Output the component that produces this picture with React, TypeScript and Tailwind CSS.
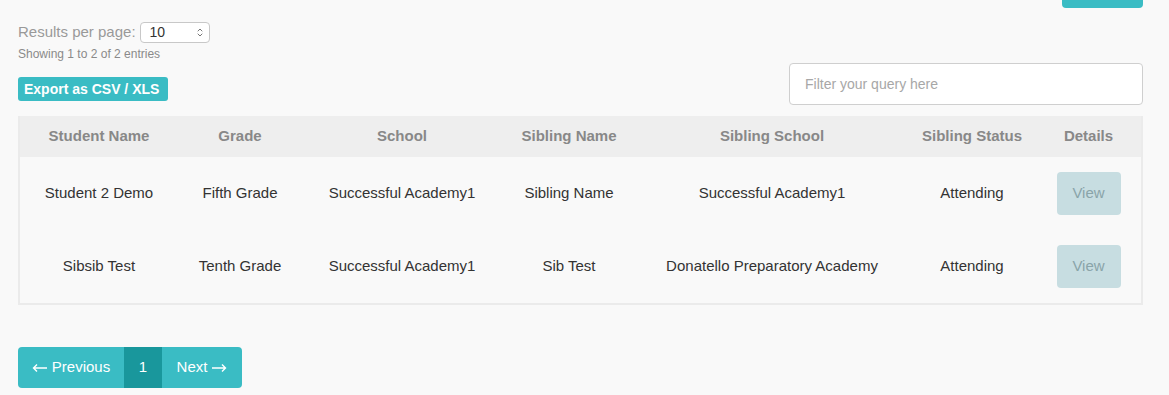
import { ChevronDown, ChevronUp } from 'lucide-react';

interface SiblingRow {
  student: string;
  grade: string;
  school: string;
  sibling: string;
  siblingSchool: string;
  status: string;
}

const rows: SiblingRow[] = [
  {
    student: 'Student 2 Demo',
    grade: 'Fifth Grade',
    school: 'Successful Academy1',
    sibling: 'Sibling Name',
    siblingSchool: 'Successful Academy1',
    status: 'Attending',
  },
  {
    student: 'Sibsib Test',
    grade: 'Tenth Grade',
    school: 'Successful Academy1',
    sibling: 'Sib Test',
    siblingSchool: 'Donatello Preparatory Academy',
    status: 'Attending',
  },
];

const headers = [
  { label: 'Student Name', w: 'w-[158px]' },
  { label: 'Grade', w: 'w-[124px]' },
  { label: 'School', w: 'w-[200px]' },
  { label: 'Sibling Name', w: 'w-[134px]' },
  { label: 'Sibling School', w: 'w-[272px]' },
  { label: 'Sibling Status', w: 'w-[128px]' },
  { label: 'Details', w: 'w-[105px]' },
];

function Arrow({ dir }: { dir: 'left' | 'right' }) {
  const d = dir === 'left' ? 'M15 5H1.5M5 1.5L1.5 5 5 8.5' : 'M0 5h13.5M10 1.5L13.5 5 10 8.5';
  return (
    <svg width="15" height="10" viewBox="0 0 15 10" fill="none" stroke="currentColor" strokeWidth="1.4">
      <path d={d} />
    </svg>
  );
}

export default function App() {
  return (
    <div className="w-[1169px] h-[395px] overflow-hidden bg-[#f9f9f9] font-['Liberation_Sans',Arial,sans-serif] text-[#333]">
      <div className="ml-[18px] w-[1125px]">
        {/* top-right action button, cut off by the viewport */}
        <div className="flex justify-end">
          <div className="w-[81px] h-[8px] rounded-b-[4px] bg-[#3abcc4]"></div>
        </div>

        <div className="flex items-start justify-between">
          <div>
            <div className="flex items-center gap-[4px] mt-[13px]">
              <span className="text-[15px] text-[#999]">Results per page:</span>
              <div className="w-[70px] h-[21px] bg-white border border-[#c8c8c8] rounded-[4px] flex items-center justify-between pl-[9px] pr-[5px]">
                <span className="text-[14px] text-[#333]">10</span>
                <div className="flex flex-col text-[#777] -space-y-[3px]">
                  <ChevronUp size={8} strokeWidth={3} />
                  <ChevronDown size={8} strokeWidth={3} />
                </div>
              </div>
            </div>
            <p className="text-[12px] text-[#8a8a8a] mt-[1px]">Showing 1 to 2 of 2 entries</p>
            <button className="mt-[14px] h-[24px] px-[6px] rounded-[3px] bg-[#3abcc4] text-white text-[14px] font-semibold leading-[24px] w-[150px] text-left">
              Export as CSV / XLS
            </button>
          </div>
          <input
            placeholder="Filter your query here"
            className="mt-[55px] w-[354px] h-[42px] bg-white border border-[#cfcfcf] rounded-[4px] px-[15px] text-[14px] placeholder:text-[#a7a7a7] outline-none"
          />
        </div>

        <div className="mt-[11px] border-b-2 border-x-2 border-[#ebebeb]">
          <table className="w-full border-collapse table-fixed text-[15px]">
            <thead>
              <tr className="bg-[#eeeeee] h-[41px]">
                {headers.map((h) => (
                  <th key={h.label} className={`${h.w} font-bold text-[#888] text-center`}>
                    {h.label}
                  </th>
                ))}
              </tr>
            </thead>
            <tbody>
              {rows.map((r) => (
                <tr key={r.student} className="h-[73px] text-center">
                  <td>{r.student}</td>
                  <td>{r.grade}</td>
                  <td>{r.school}</td>
                  <td>{r.sibling}</td>
                  <td>{r.siblingSchool}</td>
                  <td>{r.status}</td>
                  <td>
                    <button className="w-[64px] h-[43px] rounded-[4px] bg-[#c7dde1] text-[#8aa4a9] text-[15px]">
                      View
                    </button>
                  </td>
                </tr>
              ))}
            </tbody>
          </table>
        </div>

        <div className="mt-[42px] flex h-[41px] w-fit rounded-[4px] overflow-hidden text-white text-[15px]">
          <button className="w-[106px] bg-[#3abcc4] flex items-center justify-center gap-[5px]">
            <Arrow dir="left" />
            Previous
          </button>
          <button className="w-[38px] bg-[#19979c]">1</button>
          <button className="w-[80px] bg-[#3abcc4] flex items-center justify-center gap-[5px]">
            Next
            <Arrow dir="right" />
          </button>
        </div>
      </div>
    </div>
  );
}
